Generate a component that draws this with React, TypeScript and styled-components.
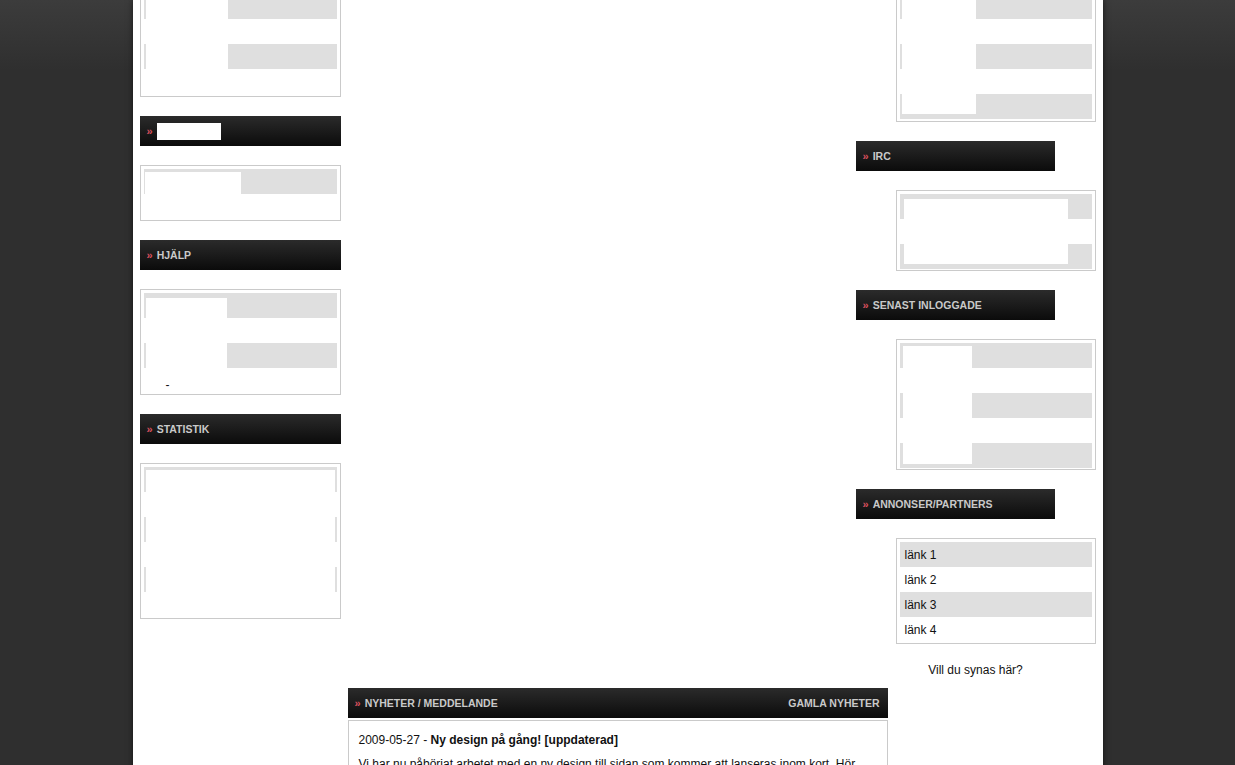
import React from 'react';
import styled, { createGlobalStyle } from 'styled-components';

const GlobalStyle = createGlobalStyle`
  html, body {
    margin: 0;
    padding: 0;
  }
  body {
    background: linear-gradient(to bottom, #3c3c3c 0px, #2f2f2f 70px, #2f2f2f 100%);
    background-color: #2f2f2f;
    font-family: "Liberation Sans", Arial, sans-serif;
    font-size: 12px;
    color: #111;
  }
`;

const Page = styled.div`
  width: 970px;
  min-height: 100vh;
  margin: 0 auto;
  padding: 0 7px 40px;
  box-sizing: border-box;
  background: #fff;
  box-shadow: 0 0 6px rgba(0, 0, 0, 0.6);
`;

const Columns = styled.div`
  display: flex;
  justify-content: space-between;
  align-items: flex-start;
`;

const LeftColumn = styled.div`
  width: 201px;
  display: flex;
  flex-direction: column;
  gap: 19px;
`;

const RightColumn = styled.div`
  width: 240px;
  display: flex;
  flex-direction: column;
  gap: 19px;
`;

const Header = styled.div<{ $width?: string }>`
  width: ${(p) => p.$width || '100%'};
  height: 30px;
  box-sizing: border-box;
  padding: 0 8px 0 7px;
  display: flex;
  align-items: center;
  justify-content: space-between;
  background: linear-gradient(to bottom, #2b2b2b 0%, #1b1b1b 50%, #0b0b0b 100%);
  color: #c9c9c9;
  font-weight: bold;
  font-size: 10.5px;
  text-transform: uppercase;
`;

const HeaderTitle = styled.span`
  display: flex;
  align-items: center;
`;

const Raquo = styled.span`
  color: #d8505e;
  font-size: 11px;
  margin-right: 4px;
`;

const WhiteTag = styled.span`
  display: inline-block;
  width: 64px;
  height: 17px;
  background: #fff;
`;

const Box = styled.div<{ $cut?: boolean; $right?: boolean }>`
  width: ${(p) => (p.$right ? '200px' : '100%')};
  margin-left: ${(p) => (p.$right ? 'auto' : '0')};
  box-sizing: border-box;
  border: 1px solid #cacaca;
  border-top: ${(p) => (p.$cut ? 'none' : '1px solid #cacaca')};
  padding: ${(p) => (p.$cut ? '0 3px 2px' : '3px 3px 1px')};
  background: #fff;
`;

const Row = styled.div<{ $gray?: boolean; $strip?: number; $stripRight?: number; $height?: number }>`
  display: flex;
  align-items: center;
  height: ${(p) => p.$height ?? 25}px;
  box-sizing: border-box;
  padding-left: ${(p) => p.$strip ?? 0}px;
  padding-right: ${(p) => p.$stripRight ?? 0}px;
  background: ${(p) => (p.$gray ? '#dfdfdf' : 'transparent')};
`;

const Field = styled.div<{ $width?: number; $top?: number; $bottom?: number }>`
  align-self: stretch;
  width: ${(p) => (p.$width ? `${p.$width}px` : 'auto')};
  flex: ${(p) => (p.$width ? '0 0 auto' : '1')};
  margin-top: ${(p) => p.$top ?? 0}px;
  margin-bottom: ${(p) => p.$bottom ?? 0}px;
  background: #fff;
`;

const Dash = styled.span`
  padding: 9px 0 0 22px;
  font-size: 12px;
`;

const LinkRow = styled(Row)`
  padding-left: 5px;
  font-size: 12px;
  color: #111;
`;

const Note = styled.div`
  text-align: center;
  font-size: 12px;
  line-height: 15px;
  color: #111;
`;

const News = styled.div`
  width: 540px;
  margin: 10px 0 0 208px;
`;

const NewsBody = styled.div`
  margin-top: 2px;
  border: 1px solid #cacaca;
  padding: 12px 10px 10px;
  font-size: 12px;
  line-height: 15px;
  color: #111;
`;

const NewsTitle = styled.div`
  margin-bottom: 9px;
  b {
    font-weight: bold;
  }
`;

const NewsText = styled.p`
  margin: 0;
`;

const links = ['länk 1', 'länk 2', 'länk 3', 'länk 4'];

export default function App() {
  return (
    <>
      <GlobalStyle />
      <Page>
        <Columns>
          <LeftColumn>
            <Box $cut>
              <Row $gray $strip={2} $height={19}>
                <Field $width={82} />
              </Row>
              <Row />
              <Row $gray $strip={2}>
                <Field $width={82} />
              </Row>
              <Row />
            </Box>

            <Header>
              <HeaderTitle>
                <Raquo>»</Raquo>
                <WhiteTag />
              </HeaderTitle>
            </Header>
            <Box>
              <Row $gray $strip={1}>
                <Field $width={96} $top={3} />
              </Row>
              <Row />
            </Box>

            <Header>
              <HeaderTitle>
                <Raquo>»</Raquo>HJÄLP
              </HeaderTitle>
            </Header>
            <Box>
              <Row $gray $strip={2}>
                <Field $width={81} $top={5} />
              </Row>
              <Row />
              <Row $gray $strip={2}>
                <Field $width={81} />
              </Row>
              <Row>
                <Dash>-</Dash>
              </Row>
            </Box>

            <Header>
              <HeaderTitle>
                <Raquo>»</Raquo>STATISTIK
              </HeaderTitle>
            </Header>
            <Box>
              <Row $gray $strip={2} $stripRight={2}>
                <Field $top={3} />
              </Row>
              <Row />
              <Row $gray $strip={2} $stripRight={2}>
                <Field />
              </Row>
              <Row />
              <Row $gray $strip={2} $stripRight={2}>
                <Field />
              </Row>
              <Row />
            </Box>
          </LeftColumn>

          <RightColumn>
            <Box $cut $right>
              <Row $gray $strip={2} $height={19}>
                <Field $width={74} />
              </Row>
              <Row />
              <Row $gray $strip={2}>
                <Field $width={74} />
              </Row>
              <Row />
              <Row $gray $strip={2}>
                <Field $width={74} $bottom={5} />
              </Row>
            </Box>

            <Header $width="199px">
              <HeaderTitle>
                <Raquo>»</Raquo>IRC
              </HeaderTitle>
            </Header>
            <Box $right>
              <Row $gray $strip={4}>
                <Field $width={164} $top={5} />
              </Row>
              <Row />
              <Row $gray $strip={4}>
                <Field $width={164} $bottom={5} />
              </Row>
            </Box>

            <Header $width="199px">
              <HeaderTitle>
                <Raquo>»</Raquo>SENAST INLOGGADE
              </HeaderTitle>
            </Header>
            <Box $right>
              <Row $gray $strip={3}>
                <Field $width={69} $top={3} />
              </Row>
              <Row />
              <Row $gray $strip={3}>
                <Field $width={69} />
              </Row>
              <Row />
              <Row $gray $strip={3}>
                <Field $width={69} $bottom={4} />
              </Row>
            </Box>

            <Header $width="199px">
              <HeaderTitle>
                <Raquo>»</Raquo>ANNONSER/PARTNERS
              </HeaderTitle>
            </Header>
            <Box $right>
              {links.map((l, i) => (
                <LinkRow key={l} $gray={i % 2 === 0}>
                  {l}
                </LinkRow>
              ))}
            </Box>

            <Note>Vill du synas här?</Note>
          </RightColumn>
        </Columns>

        <News>
          <Header>
            <HeaderTitle>
              <Raquo>»</Raquo>NYHETER / MEDDELANDE
            </HeaderTitle>
            <span>GAMLA NYHETER</span>
          </Header>
          <NewsBody>
            <NewsTitle>
              2009-05-27 - <b>Ny design på gång! [uppdaterad]</b>
            </NewsTitle>
            <NewsText>
              Vi har nu påbörjat arbetet med en ny design till sidan som kommer att lanseras inom kort.
              Hör gärna av er med synpunkter och förslag på vad ni vill se.
            </NewsText>
          </NewsBody>
        </News>
      </Page>
    </>
  );
}
